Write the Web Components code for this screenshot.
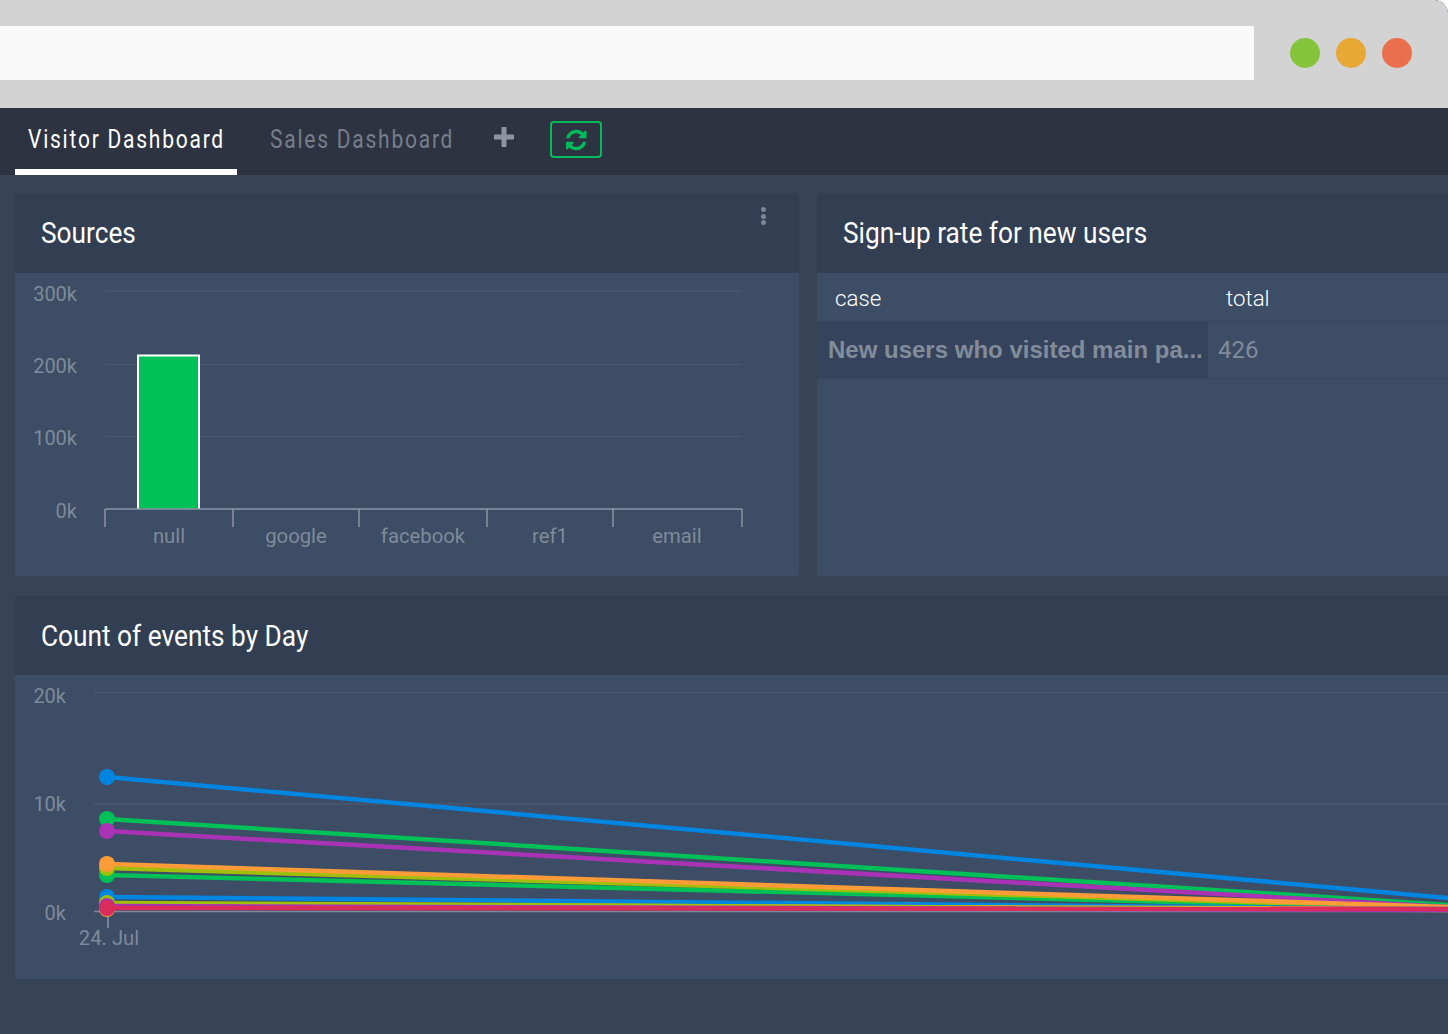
<!DOCTYPE html>
<html>
<head>
<meta charset="utf-8">
<title>Dashboard</title>
<style>
  html, body { margin: 0; height: 1034px; overflow: hidden; background: #fff; font-family: Roboto, sans-serif; }
</style>
</head>
<body>
<app-window>
  <browser-bar></browser-bar>
  <dash-tabs></dash-tabs>
  <dash-board>
    <dash-panel title="Sources" width="784" head="80" menu><bar-chart></bar-chart></dash-panel>
    <dash-panel title="Sign-up rate for new users" width="660" head="80"><rate-table></rate-table></dash-panel>
    <dash-panel title="Count of events by Day" width="1460" head="79"><line-chart></line-chart></dash-panel>
  </dash-board>
</app-window>

<script>
class AppWindow extends HTMLElement {
  constructor() {
    super();
    this.attachShadow({ mode: "open" });
    this.shadowRoot.innerHTML = `
      <style>
        :host { display: flex; flex-direction: column; height: 1034px; background: #374456; border-top-right-radius: 14px; overflow: hidden; }
      </style>
      <slot></slot>
    `;
  }
}

class BrowserBar extends HTMLElement {
  constructor() {
    super();
    this.attachShadow({ mode: "open" });
    this.shadowRoot.innerHTML = `
      <style>
        :host { display: flex; align-items: center; height: 108px; background: #d3d3d3; padding-bottom: 2px; box-sizing: border-box; }
        .url { width: 1254px; height: 54px; background: #f9f9f9; }
        .dots { display: flex; gap: 16px; margin-left: 36px; }
        .dots span { width: 30px; height: 30px; border-radius: 50%; }
      </style>
      <div class="url"></div>
      <div class="dots">
        <span style="background:#85c43b"></span>
        <span style="background:#e7a834"></span>
        <span style="background:#ea6f4c"></span>
      </div>
    `;
  }
}

class DashTabs extends HTMLElement {
  constructor() {
    super();
    this.attachShadow({ mode: "open" });
    this.shadowRoot.innerHTML = `
      <style>
        :host { display: flex; align-items: stretch; height: 67px; background: #2e3341; padding-left: 15px; }
        .tab { display: flex; align-items: center; padding: 0 0 5px 13px; height: 67px; box-sizing: border-box; font-size: 25px; letter-spacing: 2.1px; color: #767e8d; white-space: nowrap; overflow: hidden; }
        .tab span { display: inline-block; transform: scaleX(.84); transform-origin: left center; }
        .tab.active { width: 222px; color: #fff; border-bottom: 6px solid #fff; padding-bottom: 0; padding-top: 1px; margin-right: 20px; }
        .tab.other { width: 224px; }
        .plus { margin: 19px 0 0 13px; width: 20px; height: 20px; }
        .refresh { display: flex; align-items: center; justify-content: center; width: 52px; height: 37px; box-sizing: border-box; margin: 13px 0 0 36px; padding-left: 4px; border: 2px solid #00bd5a; border-radius: 4px; }
      </style>
      <div class="tab active"><span>Visitor Dashboard</span></div>
      <div class="tab other"><span>Sales Dashboard</span></div>
      <svg class="plus" viewBox="0 0 20 20"><path d="M7.500 1q0-1 1-1h3q1 0 1 1v6.500H19q1 0 1 1v3q0 1-1 1h-6.500V19q0 1-1 1h-3q-1 0-1-1v-6.500H1q-1 0-1-1v-3q0-1 1-1h6.500z" fill="#8e95a2"/></svg>
      <div class="refresh">
        <svg width="24" height="24" viewBox="0 0 1792 1792"><path fill="#00bd5a" d="M1511 1056q0 5-1 7-64 268-268 434.500t-478 166.500q-146 0-282.500-55t-243.500-157l-129 129q-19 19-45 19t-45-19-19-45v-448q0-26 19-45t45-19h448q26 0 45 19t19 45-19 45l-137 137q71 66 161 102t187 36q134 0 250-65t186-179q11-17 53-117 8-23 30-23h192q13 0 22.500 9.500t9.500 22.500zm25-800v448q0 26-19 45t-45 19h-448q-26 0-45-19t-19-45 19-45l138-138q-148-137-349-137-134 0-250 65t-186 179q-11 17-53 117-8 23-30 23h-199q-13 0-22.500-9.500t-9.500-22.500v-7q65-268 270-434.500t480-166.500q146 0 284 55.500t245 156.500l130-129q19-19 45-19t45 19 19 45z"/></svg>
      </div>
    `;
  }
}

class DashBoard extends HTMLElement {
  constructor() {
    super();
    this.attachShadow({ mode: "open" });
    this.shadowRoot.innerHTML = `
      <style>
        :host { display: flex; flex-wrap: wrap; align-content: flex-start; gap: 20px 18px; width: 1500px; padding: 18px 0 0 15px; box-sizing: border-box; }
      </style>
      <slot></slot>
    `;
  }
}

class DashPanel extends HTMLElement {
  constructor() {
    super();
    this.attachShadow({ mode: "open" });
  }

  connectedCallback() {
    const title = this.getAttribute("title");
    this.style.width = this.getAttribute("width") + "px";
    this.shadowRoot.innerHTML = `
      <style>
        :host { display: block; position: relative; height: 383px; background: #3c4d65; border-radius: 3px; overflow: hidden; }
        header { height: ${this.getAttribute("head")}px; box-sizing: border-box; padding: 0 26px; display: flex; align-items: center; background: #323e51; color: #fff; font-size: 29px; }
        header span { display: inline-block; transform: scaleX(.905); transform-origin: left center; white-space: nowrap; }
        .menu { position: absolute; top: 14px; right: 33px; display: flex; flex-direction: column; gap: 1.500px; }
        .menu i { width: 5px; height: 5px; background: #7c8696; border-radius: 50%; }
      </style>
      <header><span>${title}</span></header>
      ${this.hasAttribute("menu") ? '<div class="menu"><i></i><i></i><i></i></div>' : ""}
      <slot></slot>
    `;
  }
}

class BarChart extends HTMLElement {
  constructor() {
    super();
    this.attachShadow({ mode: "open" });
    // coordinates are in page pixels, the viewBox starts at the panel body
    const grid = [291, 364.5, 436.5].map(y => `<line x1="105" x2="742" y1="${y}" y2="${y}" stroke="#475870" stroke-width="1.500"/>`).join("");
    const yLabels = [["300k", 301], ["200k", 373], ["100k", 445], ["0k", 518]].map(([t, y]) => `<text x="77" y="${y}" text-anchor="end">${t}</text>`).join("");
    const ticks = [105, 233, 359, 487, 613, 742].map(x => `<line x1="${x}" x2="${x}" y1="509" y2="527" stroke="#8b95a4" stroke-width="1.500"/>`).join("");
    const xLabels = [["null", 169], ["google", 296], ["facebook", 423], ["ref1", 550], ["email", 677]].map(([t, x]) => `<text class="cat" x="${x}" y="543" text-anchor="middle">${t}</text>`).join("");
    this.shadowRoot.innerHTML = `
      <style>
        :host { display: block; }
        svg { display: block; }
        text { font-family: Roboto, sans-serif; font-size: 20px; fill: #7f8a9a; }
        text.cat { font-size: 20.300px; }
      </style>
      <svg width="784" height="303" viewBox="15 273 784 303">
        ${grid}
        <path d="M138 509V355.500h61V509" fill="#00c058" stroke="#fff" stroke-width="2"/>
        <line x1="105" x2="742" y1="509" y2="509" stroke="#8b95a4" stroke-width="1.500"/>
        ${ticks}${yLabels}${xLabels}
      </svg>
    `;
  }
}

class RateTable extends HTMLElement {
  constructor() {
    super();
    this.attachShadow({ mode: "open" });
    this.shadowRoot.innerHTML = `
      <style>
        :host { display: block; }
        .row { display: flex; }
        .head { border-bottom: 1px solid #36465d; align-items: center; color: #fff; font-size: 22.300px; font-weight: 300; padding-top: 2px; height: 46px; }
        .head div:first-child { width: 391px; padding-left: 18px; box-sizing: border-box; }
        .head div:last-child { padding-left: 18px; }
        .body { height: 56px; border-bottom: 1px solid #36465d; align-items: center; color: #828c9b; }
        .case { width: 391px; height: 100%; box-sizing: border-box; padding-left: 11px; display: flex; align-items: center; background: #35445c; font-family: "Liberation Sans", sans-serif; font-weight: bold; font-size: 24px; white-space: nowrap; overflow: hidden; }
        .total { padding-left: 10px; font-size: 24px; }
      </style>
      <div class="row head"><div>case</div><div>total</div></div>
      <div class="row body"><div class="case">New users who visited main pa...</div><div class="total">426</div></div>
    `;
  }
}

class LineChart extends HTMLElement {
  constructor() {
    super();
    this.attachShadow({ mode: "open" });
    // drawn back to front: y at 24 Jul, y at the right edge, colour
    const series = [
      [777, 898, "#0085e0"],
      [819, 905, "#00c058"],
      [831, 907, "#aa33b5"],
      [875, 909, "#00c058"],
      [868, 908, "#9fbf0a"],
      [864, 907, "#ff9c38"],
      [897, 909, "#0085e0"],
      [904, 909, "#ff9c38"],
      [903, 910, "#9fbf0a"],
      [906, 910, "#aa33b5"],
      [908, 909, "#d92c5c"]
    ];
    const lines = series.map(([a, b, c]) => `<line x1="107" y1="${a}" x2="1448" y2="${b}" stroke="${c}" stroke-width="4.500"/><circle cx="107" cy="${a}" r="8" fill="${c}"/>`).join("");
    this.shadowRoot.innerHTML = `
      <style>
        :host { display: block; }
        svg { display: block; }
        text { font-family: Roboto, sans-serif; font-size: 20px; fill: #7f8a9a; }
      </style>
      <svg width="1460" height="304" viewBox="15 675 1460 304">
        <line x1="94" x2="1475" y1="692.500" y2="692.500" stroke="#475870" stroke-width="1.500"/>
        <line x1="94" x2="1475" y1="804" y2="804" stroke="#475870" stroke-width="1.500"/>
        <line x1="94" x2="1475" y1="911.500" y2="911.500" stroke="#7f8a9a" stroke-width="1.500"/>
        <line x1="108" x2="108" y1="911" y2="928" stroke="#8b95a4" stroke-width="1.500"/>
        <text x="66" y="703" text-anchor="end">20k</text>
        <text x="66" y="811" text-anchor="end">10k</text>
        <text x="66" y="920" text-anchor="end">0k</text>
        <text x="109" y="945" text-anchor="middle" style="font-size:20.300px">24. Jul</text>
        <circle cx="107" cy="909" r="8" fill="#ff9c38"/>
        ${lines}
      </svg>
    `;
  }
}

customElements.define("app-window", AppWindow);
customElements.define("browser-bar", BrowserBar);
customElements.define("dash-tabs", DashTabs);
customElements.define("dash-board", DashBoard);
customElements.define("dash-panel", DashPanel);
customElements.define("bar-chart", BarChart);
customElements.define("rate-table", RateTable);
customElements.define("line-chart", LineChart);
</script>
</body>
</html>
